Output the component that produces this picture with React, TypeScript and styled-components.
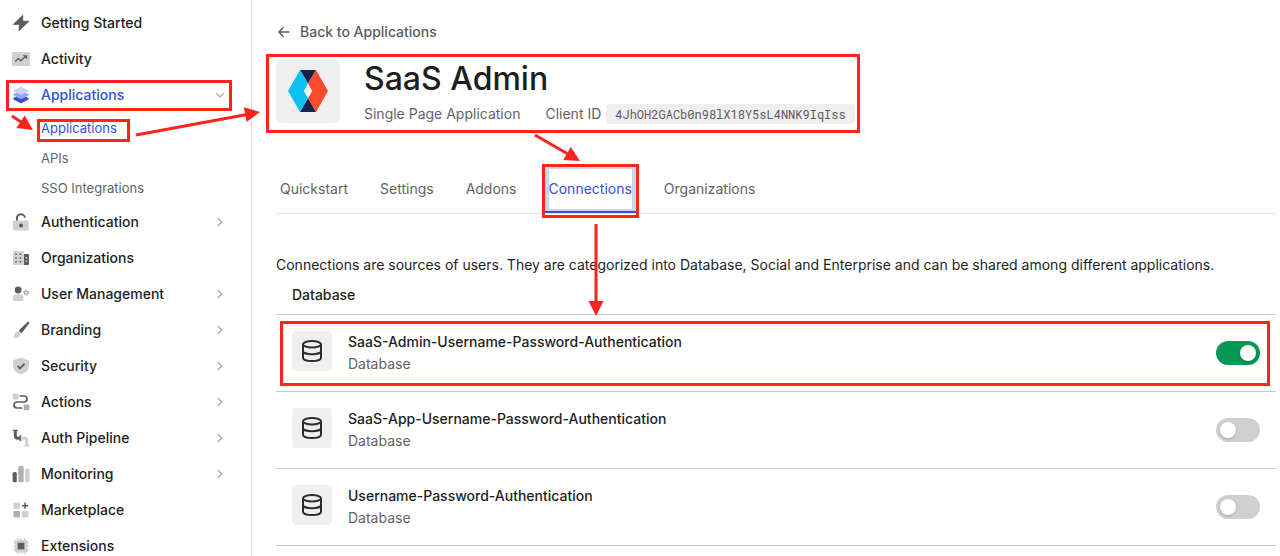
import React, { useState } from "react";
import styled, { createGlobalStyle, css } from "styled-components";

const RED = "#ff231c";
const BLUE = "#3350d8";
const DARK = "#5c5c5c";
const MID = "#b0b0b0";
const LIGHT = "#d0d0d0";

const GlobalStyle = createGlobalStyle`
  *, *::before, *::after { box-sizing: border-box; }
  body {
    margin: 0;
    background: #fff;
    color: #1e1e1e;
    font-family: Inter, "Liberation Sans", sans-serif;
    font-size: 14px;
    line-height: 20px;
  }
  a { color: inherit; text-decoration: none; }
  ul { list-style: none; margin: 0; padding: 0; }
  h1, h2, h3, p { margin: 0; }
`;

const Page = styled.div`
  position: relative;
  display: flex;
  height: 100vh;
  overflow: hidden;
`;

const Sidebar = styled.nav`
  flex: 0 0 252px;
  padding-top: 5px;
  border-right: 1px solid #dedede;
  overflow: hidden auto;
  scrollbar-width: none;
`;

const NavRow = styled.a<{ $active?: boolean }>`
  position: relative;
  display: flex;
  align-items: center;
  height: 36px;
  padding: 0 23px 0 12px;
  gap: 11px;
  font-weight: 500;
  color: ${(p) => (p.$active ? BLUE : "#1e1e1e")};
`;

const NavLabel = styled.span`
  flex: 1;
`;

const NavIcon = styled.svg`
  width: 18px;
  height: 18px;
  flex: none;
`;

const Chevron = styled.svg`
  width: 16px;
  height: 16px;
  flex: none;
  fill: none;
  stroke: #a3a3a3;
  stroke-width: 1.2;
  stroke-linecap: round;
  stroke-linejoin: round;
`;

const SubList = styled.ul`
  padding: 0 0 1px 41px;
`;

const SubItem = styled.li`
  display: flex;
  align-items: center;
  height: 30px;
  font-size: 13px;
`;

const SubLink = styled.a<{ $active?: boolean }>`
  position: relative;
  color: ${(p) => (p.$active ? BLUE : "#636363")};
`;

const Callout = styled.span<{ $inset: string }>`
  position: absolute;
  inset: ${(p) => p.$inset};
  border: 3px solid ${RED};
  pointer-events: none;
  z-index: 2;
`;

const ArrowLayer = styled.svg`
  position: absolute;
  top: 0;
  left: 0;
  width: 640px;
  height: 340px;
  pointer-events: none;
  z-index: 3;
`;

const Main = styled.main`
  flex: 1;
  min-width: 0;
  padding: 22px 4px 0 24px;
`;

const BackLink = styled.a`
  display: flex;
  align-items: center;
  width: fit-content;
  gap: 8px;
  color: #5c5c5c;
  font-weight: 500;
`;

const BackIcon = styled.svg`
  width: 16px;
  height: 16px;
  fill: none;
  stroke: #5c5c5c;
  stroke-width: 1.3;
  stroke-linecap: round;
  stroke-linejoin: round;
`;

const AppHeader = styled.header`
  position: relative;
  display: flex;
  width: fit-content;
  margin-top: 17px;
  gap: 24px;
`;

const Tile = styled.div<{ $size: number }>`
  display: flex;
  align-items: center;
  justify-content: center;
  flex: none;
  width: ${(p) => p.$size}px;
  height: ${(p) => p.$size}px;
  border-radius: ${(p) => (p.$size > 50 ? 6 : 4)}px;
  background: #efefef;
`;

const Title = styled.h1`
  font-size: 32px;
  line-height: 40px;
  font-weight: 500;
`;

const Meta = styled.div`
  display: flex;
  align-items: center;
  gap: 25px;
  margin-top: 5px;
  color: #636363;
`;

const ClientId = styled.div`
  display: flex;
  gap: 5px;
`;

const Code = styled.code`
  padding: 0 9px;
  border-radius: 4px;
  background: #efefef;
  color: #5c5c5c;
  font-family: "Roboto Mono", "DejaVu Sans Mono", monospace;
  font-size: 12px;
`;

const Tabs = styled.div`
  display: flex;
  gap: 24px;
  margin-top: 41px;
  border-bottom: 1px solid #e3e3e3;
`;

const activeTab = css`
  color: ${BLUE};
  box-shadow: inset 0 -2px ${BLUE}, inset 0 0 0 4px #c9d3f6;
`;

const Tab = styled.button<{ $active: boolean }>`
  position: relative;
  height: 48px;
  padding: 0 4px;
  border: 0;
  background: none;
  color: #636363;
  font: inherit;
  cursor: pointer;
  ${(p) => p.$active && activeTab}
`;

const Intro = styled.p`
  margin-top: 41px;
`;

const GroupTitle = styled.h2`
  padding: 10px 16px 9px;
  border-bottom: 1px solid #c9c9c9;
  font-size: 14px;
  line-height: 20px;
  font-weight: 500;
`;

const Row = styled.li`
  position: relative;
  display: flex;
  gap: 16px;
  padding: 16px;
  border-bottom: 1px solid #c9c9c9;
`;

const RowText = styled.label`
  flex: 1;
  line-height: 22px;
`;

const RowName = styled.span`
  display: block;
  font-weight: 500;
`;

const RowKind = styled.span`
  display: block;
  color: #636363;
`;

const Switch = styled.input`
  appearance: none;
  align-self: center;
  width: 44px;
  height: 24px;
  margin: 0;
  padding: 4px;
  border-radius: 12px;
  background: ${LIGHT};
  cursor: pointer;

  &::before {
    content: "";
    display: block;
    width: 16px;
    height: 16px;
    border-radius: 50%;
    background: #fff;
    box-shadow: 0 1px 3px rgba(0, 0, 0, 0.2);
  }
  &:checked { background: #059856; }
  &:checked::before { margin-left: 20px; }
`;

const DbIcon = styled.svg`
  width: 24px;
  height: 24px;
  fill: none;
  stroke: #2c2c2c;
  stroke-width: 2;
`;

const icons: Record<string, React.ReactNode> = {
  bolt: (
    <path d="M10.7 1.2 1.2 10.4H7.4L6.9 16.8 17 7.2H10.8Z" fill={DARK} stroke={DARK} strokeWidth=".8" strokeLinejoin="round" />
  ),
  activity: (
    <>
      <rect y="2" width="18" height="14" rx="1.2" fill={LIGHT} />
      <path d="M3.2 11.5 6.3 8.4 8.8 10.8 13 6.8" fill="none" stroke={DARK} strokeWidth="1.4" />
      <path d="M10.8 5.2H15.2V9.6Z" fill={DARK} />
    </>
  ),
  layers: (
    <>
      <path d="M1.4 12 9 8.4l7.6 3.6v1.5L9.8 17q-.8.4-1.6 0L1.4 13.5Z" fill={BLUE} />
      <path d="M1.4 8 9 4.4 16.6 8v1.4L9.8 12.7q-.8.4-1.6 0L1.4 9.4Z" fill="#97a7ee" />
      <path d="M1.4 4.4 8.2 1.1q.8-.4 1.6 0l6.8 3.3v.8L9.8 8.6q-.8.4-1.6 0L1.4 5.2Z" fill="#c9d3f6" />
    </>
  ),
  lock: (
    <>
      <path d="M4.9 8V5.2a4 3.7 0 0 1 8-.5" fill="none" stroke={DARK} strokeWidth="1.9" />
      <rect x="1" y="7.6" width="15.6" height="9.8" rx="1.2" fill={LIGHT} />
      <circle cx="9" cy="12.4" r="2" fill={DARK} />
    </>
  ),
  buildings: (
    <>
      <rect x="1" y="2" width="10.8" height="14" rx="1.2" fill={LIGHT} />
      <path d="M12 5h4a1 1 0 0 1 1 1v9a1 1 0 0 1-1 1h-4Z" fill={DARK} />
      <path d="M3.2 4.5h1.6V6H3.2zM7.6 4.5h1.6V6H7.6zM3.2 8.2h1.6v1.5H3.2zM7.6 8.2h1.6v1.5H7.6zM3.2 12h1.6v1.5H3.2zM7.6 12h1.6v1.5H7.6z" fill={DARK} />
      <path d="M13.6 8h1.6v1.5h-1.6zM13.6 11.6h1.6v1.5h-1.6z" fill={LIGHT} />
    </>
  ),
  user: (
    <>
      <circle cx="6.1" cy="5" r="3.4" fill={DARK} />
      <path d="M1 15V12.6a3 3 0 0 1 3-3h4.4a3 3 0 0 1 3 3V15a1 1 0 0 1-1 1H2a1 1 0 0 1-1-1Z" fill={LIGHT} />
      <circle cx="14.1" cy="7.6" r="1.7" fill="none" stroke={MID} strokeWidth="1.5" />
      <circle cx="14.1" cy="7.6" r="2.8" fill="none" stroke={MID} strokeWidth="1" strokeDasharray="1.3 1.63" />
    </>
  ),
  brush: (
    <>
      <path d="M16.9.8c.7.5.6 1.2.2 1.8L10.4 11.2 8.8 12 7 10.2 7.8 8.6 15.5 1.1c.4-.4.9-.6 1.4-.3Z" fill={DARK} />
      <path d="M6.3 10.6 8.2 12.5C8.3 16 5 17.8.8 17c1.9-.8 1.3-2.2 1.9-4 .5-1.7 2-2.6 3.6-2.4Z" fill={LIGHT} />
    </>
  ),
  shield: (
    <>
      <path d="M9 .8 16.4 3.1q.6.2.6.9V8.5c0 4.5-3.2 7.5-8 9-4.8-1.5-8-4.5-8-9V4q0-.7.6-.9Z" fill={LIGHT} />
      <path d="M5.6 9.1 8 11.4 12.6 6.7" fill="none" stroke={DARK} strokeWidth="1.8" />
    </>
  ),
  actions: (
    <>
      <rect x=".6" y=".8" width="5.8" height="5.6" rx=".8" fill={LIGHT} />
      <rect x="11.6" y="11.6" width="5.8" height="5.6" rx=".8" fill={MID} />
      <path d="M7.5 3H12a3 3 0 0 1 0 6H5a3 3 0 0 0 0 6h5.3" fill="none" stroke={DARK} strokeWidth="1.7" />
    </>
  ),
  pipe: (
    <>
      <path d="M3.3 1V6.5q0 2.7 2.7 2.7H8" fill="none" stroke={DARK} strokeWidth="3" />
      <path d="M.7 1.4H6M8.2 6.3V12" fill="none" stroke={DARK} strokeWidth="1.4" />
      <path d="M10.5 9.2h1.7q2.6 0 2.6 2.6V16.5" fill="none" stroke={LIGHT} strokeWidth="3" />
      <path d="M12.1 16.7H17.6M10.2 6.3V12" fill="none" stroke={LIGHT} strokeWidth="1.4" />
    </>
  ),
  bars: (
    <>
      <rect x=".6" y="7" width="4.2" height="10.2" rx="1.5" fill={DARK} />
      <rect x="6.3" y="1" width="5.4" height="16.2" rx="1.5" fill={MID} />
      <rect x="13" y="3.8" width="4.6" height="13.4" rx="1.5" fill={LIGHT} />
    </>
  ),
  market: (
    <>
      <rect x="1.5" y="1.6" width="6.5" height="6.5" rx="1.2" fill={LIGHT} />
      <rect x="1.5" y="10" width="6.5" height="6.5" rx="1.2" fill={MID} />
      <rect x="9.9" y="10" width="6.5" height="6.5" rx="1.2" fill={LIGHT} />
      <path d="M13.1 1.6V7.8M10 4.7h6.2" stroke={DARK} strokeWidth="1.5" />
    </>
  ),
  chip: (
    <>
      <rect x="2.8" y="2.8" width="12.6" height="12.6" rx="1.2" fill={LIGHT} />
      <path d="M5.7 1V17M9.1 1V17M12.5 1V17M1 5.7H17M1 9.1H17M1 12.5H17" stroke={LIGHT} strokeWidth="1.2" />
      <rect x="5.7" y="5.7" width="6.7" height="6.7" fill={DARK} />
    </>
  ),
};

type NavEntry = { label: string; icon: string; more?: boolean; children?: string[] };

const nav: NavEntry[] = [
  { label: "Getting Started", icon: "bolt" },
  { label: "Activity", icon: "activity" },
  { label: "Applications", icon: "layers", children: ["Applications", "APIs", "SSO Integrations"] },
  { label: "Authentication", icon: "lock", more: true },
  { label: "Organizations", icon: "buildings" },
  { label: "User Management", icon: "user", more: true },
  { label: "Branding", icon: "brush", more: true },
  { label: "Security", icon: "shield", more: true },
  { label: "Actions", icon: "actions", more: true },
  { label: "Auth Pipeline", icon: "pipe", more: true },
  { label: "Monitoring", icon: "bars", more: true },
  { label: "Marketplace", icon: "market" },
  { label: "Extensions", icon: "chip" },
];

const tabs = ["Quickstart", "Settings", "Addons", "Connections", "Organizations"];

const initialConnections = [
  { name: "SaaS-Admin-Username-Password-Authentication", on: true },
  { name: "SaaS-App-Username-Password-Authentication", on: false },
  { name: "Username-Password-Authentication", on: false },
];

const arrows = [
  [12, 116, 33, 130],
  [136, 135, 260, 112],
  [535, 135, 580, 161],
  [596, 224, 596, 316],
];

function Arrow({ points }: { points: number[] }) {
  const [x1, y1, x2, y2] = points;
  const length = Math.hypot(x2 - x1, y2 - y1);
  const angle = (Math.atan2(y2 - y1, x2 - x1) * 180) / Math.PI;
  return (
    <g transform={`translate(${x1} ${y1}) rotate(${angle})`} fill={RED}>
      <rect y="-1.5" width={length - 12} height="3" />
      <path d={`M${length} 0l-15 -7.5v15z`} />
    </g>
  );
}

function SidebarNav() {
  return (
    <Sidebar aria-label="Main">
      <ul>
        {nav.map((item) => (
          <li key={item.label}>
            <NavRow href="#" $active={!!item.children}>
              <NavIcon viewBox="0 0 18 18" aria-hidden="true">{icons[item.icon]}</NavIcon>
              <NavLabel>{item.label}</NavLabel>
              {item.children && (
                <Chevron viewBox="0 0 16 16" aria-hidden="true"><path d="M4.5 6.3 8 9.8 11.5 6.3" /></Chevron>
              )}
              {item.more && (
                <Chevron viewBox="0 0 16 16" aria-hidden="true"><path d="M6.2 4.5 9.7 8 6.2 11.5" /></Chevron>
              )}
              {item.children && <Callout $inset="3px 19px 2px 6px" />}
            </NavRow>
            {item.children && (
              <SubList>
                {item.children.map((child, i) => (
                  <SubItem key={child}>
                    <SubLink href="#" $active={i === 0}>
                      {child}
                      {i === 0 && <Callout $inset="1px -13px -4px -4px" />}
                    </SubLink>
                  </SubItem>
                ))}
              </SubList>
            )}
          </li>
        ))}
      </ul>
    </Sidebar>
  );
}

export default function App() {
  const [tab, setTab] = useState("Connections");
  const [connections, setConnections] = useState(initialConnections);
  const toggle = (name: string) =>
    setConnections((list) => list.map((c) => (c.name === name ? { ...c, on: !c.on } : c)));

  return (
    <>
      <GlobalStyle />
      <Page>
        <SidebarNav />
        <Main>
          <BackLink href="#">
            <BackIcon viewBox="0 0 16 16" aria-hidden="true">
              <path d="M13 8H3M7.3 3.5 2.8 8l4.5 4.5" />
            </BackIcon>
            Back to Applications
          </BackLink>

          <AppHeader>
            <Tile $size={64}>
              <svg width="40" height="42" viewBox="0 0 40 42" aria-hidden="true">
                <path d="M12 0H28L20 13.5Z" fill="#16214d" />
                <path d="M12 42H28L20 28Z" fill="#16214d" />
                <path d="M12 0 20 13.5 16 21 20 28 12 42 0 21Z" fill="#0ac1f2" />
                <path d="M28 0 40 21 28 42 20 28 24 21 20 13.5Z" fill="#fa4b2a" />
                <path d="M20 13.5 24 21 20 28 16 21Z" fill="#f4f4f4" />
              </svg>
            </Tile>
            <div>
              <Title>SaaS Admin</Title>
              <Meta>
                <span>Single Page Application</span>
                <ClientId>
                  <span>Client ID</span>
                  <Code>4JhOH2GACb0n98lX18Y5sL4NNK9IqIss</Code>
                </ClientId>
              </Meta>
            </div>
            <Callout $inset="-5px -5px -9px -10px" />
          </AppHeader>

          <Tabs role="tablist">
            {tabs.map((t) => (
              <Tab key={t} type="button" role="tab" aria-selected={t === tab} $active={t === tab} onClick={() => setTab(t)}>
                {t}
                {t === "Connections" && <Callout $inset="-1px -3px -5px -3px" />}
              </Tab>
            ))}
          </Tabs>

          <Intro>
            Connections are sources of users. They are categorized into Database, Social and Enterprise and can be
            shared among different applications.
          </Intro>

          <GroupTitle>Database</GroupTitle>
          <ul>
            {connections.map((c, i) => (
              <Row key={c.name}>
                <Tile $size={40}>
                  <DbIcon viewBox="0 0 24 24" aria-hidden="true">
                    <ellipse cx="12" cy="5.2" rx="9" ry="3.2" />
                    <path d="M3 5.2V18.8c0 1.8 4 3.2 9 3.2s9-1.4 9-3.2V5.2M3 12c0 1.8 4 3.2 9 3.2s9-1.4 9-3.2" />
                  </DbIcon>
                </Tile>
                <RowText htmlFor={`connection-${i}`}>
                  <RowName>{c.name}</RowName>
                  <RowKind>Database</RowKind>
                </RowText>
                <Switch id={`connection-${i}`} type="checkbox" role="switch" checked={c.on} onChange={() => toggle(c.name)} />
                {i === 0 && <Callout $inset="6px 6px 5px 4px" />}
              </Row>
            ))}
          </ul>
        </Main>
        <ArrowLayer aria-hidden="true">
          {arrows.map((points, i) => (
            <Arrow key={i} points={points} />
          ))}
        </ArrowLayer>
      </Page>
    </>
  );
}
